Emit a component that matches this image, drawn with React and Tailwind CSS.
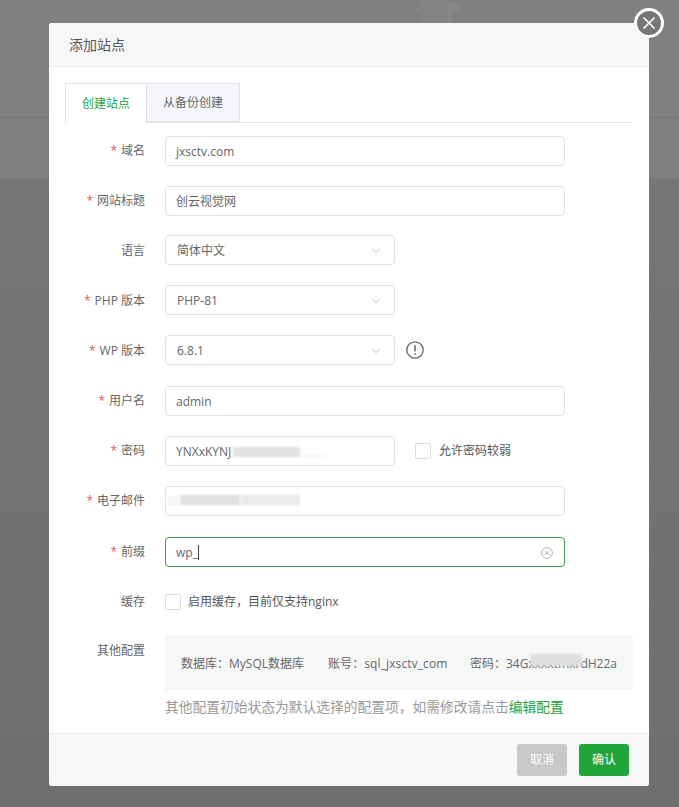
import { ChevronDown } from "lucide-react";

const FONT = "font-['Open_Sans','Noto_Sans_CJK_SC',sans-serif]";

function Row({ label, required, children, className = "", labelClass = "" }) {
  return (
    <div className={`flex items-center ${className}`}>
      <label className={`w-[80px] shrink-0 text-right text-xs text-[#666] ${labelClass}`}>
        {required ? <span className="mr-1 text-[#e05a5a]">*</span> : null}
        {label}
      </label>
      <div className="ml-5 flex min-w-0 flex-1 items-center">{children}</div>
    </div>
  );
}

function TextBox({ value, width = "w-[400px]", children }) {
  return (
    <div className={`relative flex h-[30px] items-center rounded-[4px] border border-[#e2e2e2] bg-white px-[10px] pt-px text-xs text-[#666] ${width}`}>
      <span>{value}</span>
      {children}
    </div>
  );
}

function SelectBox({ value }) {
  return (
    <div className="flex h-[30px] w-[230px] items-center justify-between rounded-[4px] border border-[#e2e2e2] bg-white px-[11px] pt-px text-xs text-[#666]">
      <span>{value}</span>
      <ChevronDown size={14} strokeWidth={1} className="text-[#999]" />
    </div>
  );
}

function Blur({ className }) {
  return <span className={`absolute blur-[1px] ${className}`} />;
}

export default function App() {
  return (
    <div className={`relative h-[807px] w-[679px] overflow-hidden bg-[#797979] ${FONT}`}>
      {/* dimmed page behind the dialog */}
      <div className="absolute inset-x-0 top-0 h-[117px] bg-[#808080]" />
      <div className="absolute inset-x-0 top-[117px] h-[61px] border-t border-[#757575] bg-[#7f7f7f]" />
      <div className="absolute inset-x-0 top-[178px] bottom-0 bg-gradient-to-b from-[#767676] to-[#6f6f6f]" />
      <svg viewBox="0 0 50 24" className="absolute left-[412px] top-0 h-[24px] w-[50px]">
        <path d="M3 10 L9 3 V10 Z" fill="#888888" />
        <path d="M8 0 H36 V24 H9 Z" fill="#838383" />
        <path d="M36 2 L47 3 L49 11 L40 12 V24 H36 Z" fill="#878787" />
      </svg>

      <div className="relative ml-[49px] pt-[23px]">
        <div className="relative w-[600px] rounded-[3px] bg-white">
          <div className="flex h-[44px] items-center rounded-t-[3px] border-b border-[#eeeeee] bg-[#f7f7f7] pl-5 text-[14px] text-[#555]">
            添加站点
          </div>

          <div className="h-[666px] px-4 pt-4">
            <div className="flex h-[40px] border-b border-[#e6e6e6]">
              <div className="-mb-px flex w-[82px] items-center justify-center border border-b-0 border-[#dfe1e6] bg-white text-xs text-[#20a53a]">
                创建站点
              </div>
              <div className="flex w-[93px] items-center justify-center border border-l-0 border-[#dfe1e6] bg-[#f5f6fa] text-xs text-[#666]">
                从备份创建
              </div>
            </div>

            <div className="mt-[13px] flex flex-col gap-5">
              <Row label="域名" required>
                <TextBox value="jxsctv.com" />
              </Row>
              <Row label="网站标题" required>
                <TextBox value="创云视觉网" />
              </Row>
              <Row label="语言" className="-mt-px" labelClass="pt-px">
                <SelectBox value="简体中文" />
              </Row>
              <Row label="PHP 版本" required labelClass="pt-px">
                <SelectBox value="PHP-81" />
              </Row>
              <Row label="WP 版本" required labelClass="pt-px">
                <SelectBox value="6.8.1" />
                <svg viewBox="0 0 18 18" className="ml-[11px] h-[18px] w-[18px] text-[#666]" fill="none" stroke="currentColor">
                  <circle cx="9" cy="9" r="8.2" strokeWidth="1.3" />
                  <path d="M9 4.2v6.2" strokeWidth="1.6" />
                  <path d="M9 12.2v1.6" strokeWidth="1.6" />
                </svg>
              </Row>
              <Row label="用户名" required className="mt-px">
                <TextBox value="admin" />
              </Row>
              <Row label="密码" required>
                <TextBox value="YNXxKYNJ" width="w-[230px]">
                  <Blur className="left-[67px] top-[10px] h-[10px] w-[67px] bg-[#e2e2e2]" />
                  <Blur className="left-[134px] top-[18px] h-[2px] w-[26px] bg-[#f4f4f4]" />
                </TextBox>
                <span className="ml-5 h-4 w-4 rounded-[2px] border border-[#dcdcdc] bg-white" />
                <span className="ml-2 text-xs text-[#555]">允许密码较弱</span>
              </Row>
              <Row label="电子邮件" required>
                <TextBox value="">
                  <Blur className="left-[14px] top-[8px] h-[10px] w-[60px] bg-[#e0e0e0]" />
                  <Blur className="left-[74px] top-[8px] h-[10px] w-[60px] bg-[#eaeaea]" />
                  <Blur className="left-[1px] top-[9px] h-[10px] w-[13px] bg-[#f5f5f5]" />
                </TextBox>
              </Row>
              <Row label="前缀" required className="mt-px" labelClass="-mt-px">
                <div className="flex h-[30px] w-[400px] items-center justify-between rounded-[4px] border border-[#3f9a56] bg-white px-[10px] pt-px text-xs text-[#666]">
                  <span className="flex items-center">
                    wp_
                    <span className="h-[15px] w-px bg-[#444]" />
                  </span>
                  <svg viewBox="0 0 12 12" className="mr-px h-3 w-3 text-[#aaa]" fill="none" stroke="currentColor" strokeWidth="0.9">
                    <circle cx="6" cy="6" r="5.4" />
                    <path d="M4.2 4.2l3.6 3.6M7.8 4.2l-3.6 3.6" />
                  </svg>
                </div>
              </Row>
              <Row label="缓存">
                <div className="flex h-[30px] items-center">
                  <span className="h-4 w-4 rounded-[2px] border border-[#dcdcdc] bg-white" />
                  <span className="ml-[7px] text-xs text-[#555]">启用缓存，目前仅支持nginx</span>
                </div>
              </Row>
            </div>

            <div className="mt-[18px] flex items-start">
              <div className="w-[80px] shrink-0 pt-[8px] text-right text-xs text-[#666]">其他配置</div>
              <div className="ml-5 flex-1">
                <div className="relative flex h-[56px] items-center whitespace-nowrap bg-[#f6f7f7] pl-4 pt-[2px] text-xs text-[#666]">
                  <span className="w-[147px]">数据库：MySQL数据库</span>
                  <span className="w-[142px] tracking-[0.1px]">账号：sql_jxsctv_com</span>
                  <span>密码：34GxxxxtfnxrdH22a</span>
                  <Blur className="left-[365px] top-[19px] h-[12px] w-[52px] bg-[#dedede]" />
                </div>
                <div className="mt-[7px] whitespace-nowrap text-[13.75px] leading-[18px] text-[#999]">
                  其他配置初始状态为默认选择的配置项，如需修改请点击
                  <span className="text-[#20a53a]">编辑配置</span>
                </div>
              </div>
            </div>
          </div>

          <div className="flex h-[53px] items-center justify-end gap-3 rounded-b-[3px] border-t border-[#eeeeee] bg-[#f6f8f8] pr-5">
            <button className="h-8 w-[50px] rounded-[3px] bg-[#c8c8c8] text-xs text-white">取消</button>
            <button className="h-8 w-[50px] rounded-[3px] bg-[#20a53a] text-xs text-white">确认</button>
          </div>

          <button className="absolute -right-[15px] -top-[15px] flex h-[30px] w-[30px] items-center justify-center rounded-full border-[3px] border-white bg-[#777]">
            <svg viewBox="0 0 14 14" className="h-[14px] w-[14px]" fill="none" stroke="white" strokeWidth="1.7">
              <path d="M1.5 1.5l11 11M12.5 1.5l-11 11" />
            </svg>
          </button>
        </div>
      </div>
    </div>
  );
}
